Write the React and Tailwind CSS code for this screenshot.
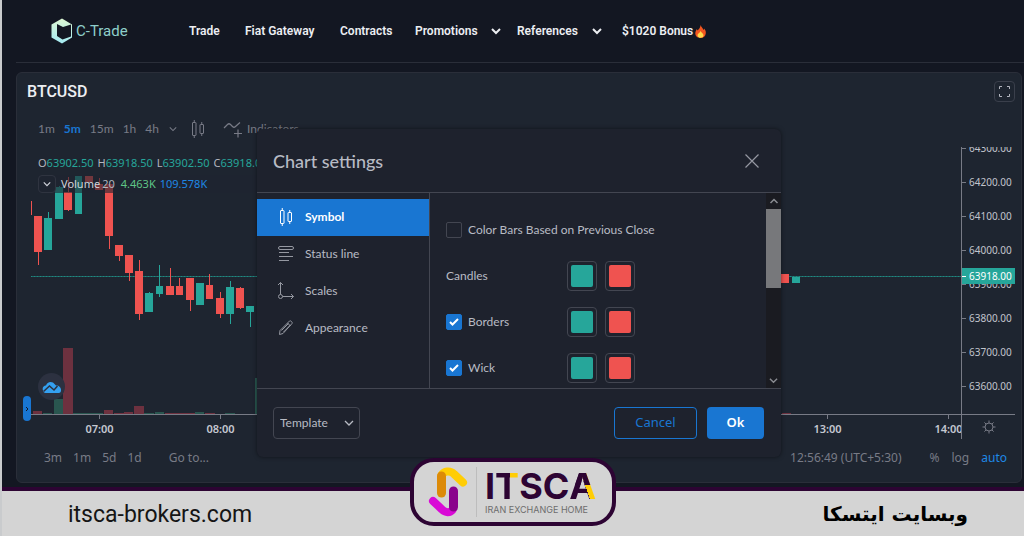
import React from "react";

const UI = "font-['Lato','Open_Sans',sans-serif]";
const NUM = "font-['Noto_Sans','Open_Sans',sans-serif]";

const CANDLES = [
  // x, width, wick top, body top, body bottom, wick bottom, up
  [30, 2, 201, 201, 215, 215, 0],
  [34, 8, 216, 216, 252, 265, 0],
  [44, 8, 212, 218, 250, 250, 1],
  [55, 8, 186, 187, 219, 219, 1],
  [64, 8, 177, 192, 210, 211, 0],
  [75, 7, 176, 176, 214, 214, 1],
  [85, 8, 176, 176, 182, 182, 0],
  [95, 8, 178, 184, 190, 190, 0],
  [105, 8, 184, 184, 236, 249, 0],
  [115, 8, 245, 245, 256, 261, 0],
  [125, 8, 255, 255, 273, 281, 0],
  [135, 8, 260, 271, 314, 320, 0],
  [145, 8, 292, 293, 312, 312, 1],
  [156, 7, 265, 286, 294, 297, 1],
  [166, 8, 268, 286, 295, 295, 0],
  [176, 7, 278, 286, 295, 295, 0],
  [186, 8, 278, 278, 300, 311, 0],
  [196, 8, 283, 283, 305, 305, 1],
  [206, 7, 274, 285, 299, 299, 0],
  [216, 8, 292, 298, 314, 318, 0],
  [226, 8, 281, 287, 314, 324, 1],
  [236, 8, 287, 288, 308, 309, 0],
  [246, 8, 306, 306, 312, 327, 1],
  [781, 8, 274, 274, 283, 283, 0],
  [792, 8, 277, 277, 283, 283, 1],
];

const VOLUME = [
  [33, 9, 411, 0],
  [43, 9, 413, 1],
  [54, 9, 399, 1],
  [63, 10, 348, 0],
  [73, 30, 413, 1],
  [104, 9, 410, 0],
  [114, 10, 413, 0],
  [124, 9, 412, 0],
  [134, 10, 406, 0],
  [144, 10, 413, 1],
  [155, 9, 412, 1],
  [165, 30, 413, 0],
  [195, 9, 412, 1],
  [205, 10, 413, 0],
  [225, 10, 413, 1],
  [255, 2, 378, 1],
  [782, 9, 413, 0],
];

const OX = 31;
const OY = 147;

function Plot() {
  return (
    <svg className="block h-full w-full" aria-hidden="true" shapeRendering="crispEdges">
      {VOLUME.map(([x, w, top, up]) => (
        <rect key={x} x={x - OX} y={top - OY} width={w} height={414 - top} fill={up ? "#29564f" : "#6d313f"} />
      ))}
      <line x1="0" x2="100%" y1="129.5" y2="129.5" stroke="#206a69" />
      <line x1="0" x2="100%" y1="129.5" y2="129.5" stroke="#1f8a80" strokeDasharray="1 2" />
      {CANDLES.map(([x, w, wt, bt, bb, wb, up]) => (
        <g key={x} fill={up ? "#26a69a" : "#ef5350"}>
          <rect x={x - OX + Math.floor(w / 2)} y={wt - OY} width="1" height={wb - wt} />
          <rect x={x - OX} y={bt - OY} width={w} height={bb - bt} />
        </g>
      ))}
    </svg>
  );
}

function CandlesIcon({ className }) {
  return (
    <svg className={className} width="14" height="20" viewBox="0 0 14 20" fill="none" stroke="currentColor">
      <rect x="1.500" y="3.500" width="3.500" height="13" rx=".5" />
      <path d="M3.250 1v2.500M3.250 16.500v2.500" />
      <rect x="9" y="5.500" width="3.500" height="9" rx=".5" />
      <path d="M10.750 3v2.500M10.750 14.500v2.500" />
    </svg>
  );
}

function Chevron({ size = 10, width = 1.3, up = false }) {
  return (
    <svg width={size} height={size} viewBox="0 0 10 10" fill="none" stroke="currentColor" strokeWidth={width} aria-hidden="true">
      <path d={up ? "M1.500 7L5 3.500 8.500 7" : "M1 3l4 4 4-4"} />
    </svg>
  );
}

function BrandMark() {
  return (
    <svg width="22" height="26" viewBox="0 0 22 26" aria-hidden="true">
      <defs>
        <linearGradient id="brand" x1="0" y1="0" x2="0" y2="1">
          <stop offset="0" stopColor="#dcf6d2" />
          <stop offset="1" stopColor="#a4eaf3" />
        </linearGradient>
      </defs>
      <path d="M11 0.500L0.500 6.500v13L11 25.500l10-6v-13z" fill="url(#brand)" />
      <path d="M6 6l6 3 8-2.500v12L11.500 21.500 6 18z" fill="#131722" />
    </svg>
  );
}

function Flame() {
  return (
    <svg width="11" height="13" viewBox="0 0 11 13" aria-hidden="true">
      <path d="M5.500 0C6 2 8 3 8.500 5c.5-.4.6-1 .6-1.500C10.500 5 11 6.700 10.800 8.300 10.500 11.300 8.500 13 5.500 13S.3 11.200.3 8.300C.3 6.300 1.300 5.300 1.800 4c.4.500.5 1 .6 1.500C4 4.500 5.500 2.500 5.500 0z" fill="#f4561f" />
      <path d="M5.600 6c.4 1.300 2.900 2.300 2.900 4.300 0 1.700-1.300 2.500-3 2.500s-3-1-3-2.600C2.500 8.300 5 8 5.600 6z" fill="#ffd94a" />
    </svg>
  );
}

function Header() {
  const link = "flex items-center text-xs font-semibold text-[#eceef2]";
  return (
    <header className="ml-3.5 flex h-[63px] items-center border-b border-[#2a2e39] pl-[35px] font-['Roboto','Inter',sans-serif]">
      <a href="#home" className="flex w-[138px] items-center gap-[3px] text-[15px] text-[#8fcfcb]">
        <BrandMark />
        C-Trade
      </a>
      <nav className="flex items-center">
        <a href="#trade" className={`${link} w-14`}>Trade</a>
        <a href="#fiat" className={`${link} w-[95px]`}>Fiat Gateway</a>
        <a href="#contracts" className={`${link} w-[75px]`}>Contracts</a>
        <button className={`${link} w-[102px] justify-between pr-4`}>Promotions <Chevron width={2} /></button>
        <button className={`${link} w-[105px] justify-between pr-5`}>References <Chevron width={2} /></button>
        <a href="#bonus" className={`${link} gap-0.5`}>$1020 Bonus <Flame /></a>
      </nav>
    </header>
  );
}

function Toolbar() {
  return (
    <div className={`mt-[9px] flex h-5 items-center gap-2.5 pl-[21px] text-xs text-[#787b86] ${UI}`}>
      <div className="flex items-center gap-[9px]">
        <button>1m</button>
        <button className="font-bold text-[#1976d2]">5m</button>
        <button>15m</button>
        <button>1h</button>
        <button>4h</button>
      </div>
      <button aria-label="More intervals"><Chevron size={8} /></button>
      <button aria-label="Candles" className="ml-1"><CandlesIcon /></button>
      <button className="ml-2 flex items-center gap-1">
        <svg width="20" height="18" viewBox="0 0 20 18" fill="none" stroke="currentColor" strokeWidth="1.200" aria-hidden="true">
          <path d="M1 8l3.500-3.500c1-1 2-1 3 0l2 2c1 1 2 1 3 0L17 2.500M15 9.500v8M11 13.500h8" />
        </svg>
        Indicators
      </button>
    </div>
  );
}

const PRICES = ["64300.00", "64200.00", "64100.00", "64000.00", "63900.00", "63800.00", "63700.00", "63600.00"];

function Legend() {
  const items = [["O", "63902.50"], ["H", "63918.50"], ["L", "63902.50"], ["C", "63918.00"]];
  return (
    <div className="absolute left-[7px] top-2 text-[11px] leading-4 text-[#b2b5be]">
      <div className="flex gap-1">
        {items.map(([k, v]) => (
          <span key={k}>{k}<span className="text-[#26a69a]">{v}</span></span>
        ))}
      </div>
      <div className="mt-1 flex h-[18px] items-center bg-[#1e2530]/60">
        <button aria-label="Collapse legend" className="mr-[5px] flex size-[18px] items-center justify-center rounded-sm border border-[#2f3440] text-[#d1d4dc]">
          <Chevron size={8} width={1.5} />
        </button>
        <span className="text-[#d1d4dc]">Volume</span>
        <span className="ml-0.5">20</span>
        <span className="ml-1.5 text-[#5fc587]">4.463K</span>
        <span className="ml-1 text-[#1e88e5]">109.578K</span>
      </div>
    </div>
  );
}

function Chart() {
  return (
    <div className={`relative ml-3.5 mr-1.5 mt-2 grid grid-cols-[1fr_54px] grid-rows-[268px_24px] ${NUM}`}>
      <div className="relative overflow-hidden border-b border-[#787b86]">
        <Plot />
        <Legend />
      </div>
      <div className="relative overflow-hidden border-b border-l border-[#787b86] text-[10px] text-[#c1c4cc]">
        <ul className="-mt-4">
          {PRICES.map((p) => (
            <li key={p} className="flex h-[34px] items-center gap-[3px] before:h-px before:w-1 before:bg-[#787b86]">{p}</li>
          ))}
        </ul>
        <div className="absolute left-0 right-0 top-[121px] flex h-4 items-center gap-[3px] bg-[#26a69a] text-white before:h-px before:w-1 before:bg-white">63918.00</div>
      </div>
      <div className="flex justify-between overflow-hidden text-[11px] font-semibold text-[#c5c8d0]">
        {[["07:00", "08:00"], ["13:00", "14:00"]].map((group, i) => (
          <div key={group[0]} className={i ? "-mr-12 flex" : "ml-2 flex"}>
            {group.map((t) => (
              <span key={t} className="flex w-[121px] flex-col items-center leading-5 before:h-1 before:w-px before:bg-[#787b86]">{t}</span>
            ))}
          </div>
        ))}
      </div>
      <button aria-label="Scale settings" className="flex items-center justify-center border-l border-[#787b86] text-[#787b86]">
        <svg width="14" height="14" viewBox="0 0 14 14" fill="none" stroke="currentColor" aria-hidden="true">
          <circle cx="7" cy="7" r="4" />
          <path d="M7 .5V3M7 11v2.500M.5 7H3M11 7h2.500M2.400 2.400l1.700 1.700M9.900 9.900l1.700 1.700M2.400 11.600l1.700-1.700M9.900 4.100l1.700-1.700" />
        </svg>
      </button>
      <a href="#tradingview" aria-label="TradingView" className="absolute left-[7px] top-[226px] flex size-[27px] items-center justify-center rounded-full bg-[#2c3140]">
        <svg width="20" height="14" viewBox="0 0 20 14" aria-hidden="true">
          <path d="M1 10.500C0 8 1.500 5.500 4 5.500 5 2.500 8 1 11 2.500l3 3c3 0 5.500 2 5 5.500-.3 1-1 2-2 2H3.500C2 13 1.300 12 1 10.500z" fill="#34a0f0" />
          <path d="M1.500 11.500l6-5.500 4.500 4 3.500-4" fill="none" stroke="#2c3140" strokeWidth="1.500" />
        </svg>
      </a>
      <button aria-label="Show drawing toolbar" className="absolute -left-2 top-[249px] flex h-[25px] w-2 items-center justify-center rounded-sm bg-[#1976d2] text-[#101828]">
        <svg width="4" height="6" viewBox="0 0 4 6" fill="none" stroke="currentColor" aria-hidden="true"><path d="M1 1l2 2-2 2" /></svg>
      </button>
    </div>
  );
}

function BottomBar() {
  return (
    <div className={`flex h-[38px] items-center justify-between pl-[27px] pr-3.5 text-xs text-[#787b86] ${NUM}`}>
      <div className="flex gap-[11px]">
        <button>3m</button>
        <button>1m</button>
        <button>5d</button>
        <button>1d</button>
        <button className="ml-4">Go to...</button>
      </div>
      <div className="flex">
        <button className="mr-7">12:56:49 (UTC+5:30)</button>
        <button className="mr-3">%</button>
        <button className="mr-3">log</button>
        <button className="text-[#1e88e5]">auto</button>
      </div>
    </div>
  );
}

const TABS = [
  ["Symbol", <CandlesIcon key="i" />],
  ["Status line", (
    <svg key="i" width="16" height="17" viewBox="0 0 16 17" fill="none" stroke="currentColor">
      <rect x=".5" y="1.500" width="15" height="3" rx="1.500" />
      <path d="M1 7.500h10M1 11.500h14M1 15.500h10" />
    </svg>
  )],
  ["Scales", (
    <svg key="i" width="18" height="20" viewBox="0 0 18 20" fill="none" stroke="currentColor">
      <path d="M3.500 13.500V1.500M1 4l2.500-2.500L6 4M5.500 15.500h11M14 13l2.500 2.500L14 18" />
      <circle cx="3.500" cy="15.500" r="2" />
    </svg>
  )],
  ["Appearance", (
    <svg key="i" width="16" height="17" viewBox="0 0 16 17" fill="none" stroke="currentColor">
      <path d="M1.500 15.500l.5-4L11.500 2c1-1 3.500 1.500 2.500 2.500L5 14.500zM9.500 4l3 3M3.500 11.500l7-7M5.500 13l7-7" />
    </svg>
  )],
];

function Check({ label, checked }) {
  return (
    <label className="flex items-center gap-1.5">
      <span className="relative flex size-4">
        <input
          type="checkbox"
          defaultChecked={checked}
          className="peer size-4 appearance-none rounded-xs border border-[#434651] checked:border-[#1976d2] checked:bg-[#1976d2]"
        />
        <svg className="pointer-events-none absolute inset-0 hidden text-white peer-checked:block" viewBox="0 0 16 16" fill="none" stroke="currentColor" strokeWidth="2" aria-hidden="true">
          <path d="M4 8l2.500 2.500L12 5" />
        </svg>
      </span>
      {label}
    </label>
  );
}

function Swatches({ name }) {
  return (
    <div className="flex gap-2">
      <button aria-label={`${name} up color`} className="size-[30px] rounded-sm border border-[#434651] p-[3px]">
        <span className="block size-full rounded-xs bg-[#26a69a]" />
      </button>
      <button aria-label={`${name} down color`} className="size-[30px] rounded-sm border border-[#434651] p-[3px]">
        <span className="block size-full rounded-xs bg-[#ef5350]" />
      </button>
    </div>
  );
}

function Settings() {
  const row = "grid h-[46px] grid-cols-[121px_1fr] items-center";
  return (
    <section role="dialog" aria-label="Chart settings" className={`absolute left-1/2 top-14 flex w-[524px] -translate-x-1/2 flex-col rounded-md bg-[#1e222d] text-xs text-[#b8bbc4] shadow-[0_0_4px_rgba(0,0,0,.5)] ${UI}`}>
      <div className="flex h-16 items-center justify-between border-b border-[#434651] pl-4 pr-[21px]">
        <h2 className="text-lg font-medium">Chart settings</h2>
        <button aria-label="Close" className="text-[#9598a1]">
          <svg width="16" height="16" viewBox="0 0 16 16" fill="none" stroke="currentColor" strokeWidth="1.200"><path d="M1.500 1.500l13 13M14.500 1.500l-13 13" /></svg>
        </button>
      </div>
      <div className="flex h-[195px]">
        <nav className="w-[173px] border-r border-[#434651] pt-1.5">
          {TABS.map(([label, icon], i) => (
            <button key={label} className={`flex h-[37px] w-full items-center gap-2.5 pb-0.5 pl-5 ${i === 0 ? "bg-[#1976d2] font-bold text-white" : ""}`}>
              <span className={`flex w-[18px] justify-center ${i === 0 ? "" : "text-[#9598a1]"}`}>{icon}</span>
              {label}
            </button>
          ))}
        </nav>
        <div className="flex-1 overflow-hidden pl-4 pt-3.5">
          <div className="flex h-[46px] items-center"><Check label="Color Bars Based on Previous Close" /></div>
          <div className={row}>Candles <Swatches name="Candles" /></div>
          <div className={row}><Check label="Borders" checked /><Swatches name="Borders" /></div>
          <div className={row}><Check label="Wick" checked /><Swatches name="Wick" /></div>
        </div>
        <div className="flex w-[15px] flex-col items-center bg-[#1a1b21] text-[#8a8c92]">
          <span className="flex h-4 items-center"><Chevron up width={1.500} /></span>
          <span className="h-[79px] w-full bg-[#77787b]" />
          <span className="mt-auto flex h-4 items-center"><Chevron width={1.500} size={9} /></span>
        </div>
      </div>
      <div className="flex h-[69px] items-center gap-2.5 border-t border-[#434651] pl-4 pr-[17px]">
        <div className="relative mr-auto">
          <select aria-label="Template" className="h-8 w-[87px] appearance-none rounded-sm border border-[#434651] pl-1.5 text-xs">
            <option>Template</option>
          </select>
          <span className="pointer-events-none absolute right-1.5 top-[11px]"><Chevron /></span>
        </div>
        <button className={`h-8 w-[83px] rounded-sm border border-[#1976d2] text-[13px] text-[#1976d2] ${NUM}`}>Cancel</button>
        <button className={`h-8 w-[57px] rounded-sm bg-[#1976d2] text-[13px] font-semibold text-white ${NUM}`}>Ok</button>
      </div>
    </section>
  );
}

function Badge() {
  return (
    <div className="absolute bottom-2.5 left-1/2 flex h-[68px] w-[206px] -translate-x-1/2 items-center rounded-[24px] border-4 border-[#2d0433] bg-[#d4d4d4] pl-3.5">
      <svg width="40" height="50" viewBox="0 0 40 50" fill="none" strokeWidth="9" strokeLinecap="round" strokeLinejoin="round" aria-hidden="true">
        <path d="M13.500 8C16 4 22 3 26 7l9 8.500" stroke="#ffcd05" strokeWidth="8" />
        <path d="M13.500 26V9" stroke="#dc8a08" />
        <path d="M5 34l9 8.500c3.500 3.500 8 3.500 10.500.500" stroke="#d90ad6" strokeWidth="8" />
        <path d="M25.500 24v16" stroke="#8a028c" />
      </svg>
      <div className="mx-2 h-[50px] w-px bg-[#bdbdbd]" />
      <div className="font-['Inter',sans-serif] text-[#2d0433]">
        <div className="flex text-4xl font-bold leading-9">
          <span>I</span>
          <span className="bg-[linear-gradient(90deg,#2d0433_61%,#ffcd05_61%)] bg-clip-text text-transparent">T</span>
          <span>SC</span>
          <span className="bg-[linear-gradient(180deg,#2d0433_46%,transparent_46%),linear-gradient(70deg,#2d0433_57%,#ffcd05_57%)] bg-clip-text text-transparent">A</span>
        </div>
        <div className="text-[9px] leading-3 text-[#6d6d6d]">IRAN EXCHANGE HOME</div>
      </div>
    </div>
  );
}

export default function App() {
  return (
    <div className="relative flex min-h-screen flex-col border-l-2 border-[#c9cbcd] bg-[#131722]">
      <Header />
      <main className="relative mb-1 ml-3.5 mr-0.5 mt-[9px] flex-1 rounded-md border border-[#2a2e39] bg-[#1e2530]">
        <div className="flex h-[37px] items-center justify-between pl-2.5 pr-1.5">
          <h1 className="font-['Roboto',sans-serif] text-base font-medium text-[#eceef2]">BTCUSD</h1>
          <button aria-label="Full screen" className="flex size-[21px] items-center justify-center rounded-sm border border-[#3a3f4b] text-[#b2b5be]">
            <svg width="11" height="11" viewBox="0 0 11 11" fill="none" stroke="currentColor"><path d="M.5 3V.5H3M8 .5h2.500V3M10.500 8v2.500H8M3 10.500H.5V8" /></svg>
          </button>
        </div>
        <Toolbar />
        <Chart />
        <BottomBar />
        <Settings />
      </main>
      <footer className="flex h-[49px] items-center justify-between border-t-4 border-[#2d0433] bg-[#d4d4d4] pl-[66px] pr-14 pt-1 text-black">
        <a href="#site" className="font-['Roboto',sans-serif] text-[23px] text-[#151515]">itsca-brokers.com</a>
        <span dir="rtl" lang="fa" className="pb-1 font-['DejaVu_Sans',sans-serif] text-xl font-bold">وبسایت ایتسکا</span>
      </footer>
      <Badge />
    </div>
  );
}
